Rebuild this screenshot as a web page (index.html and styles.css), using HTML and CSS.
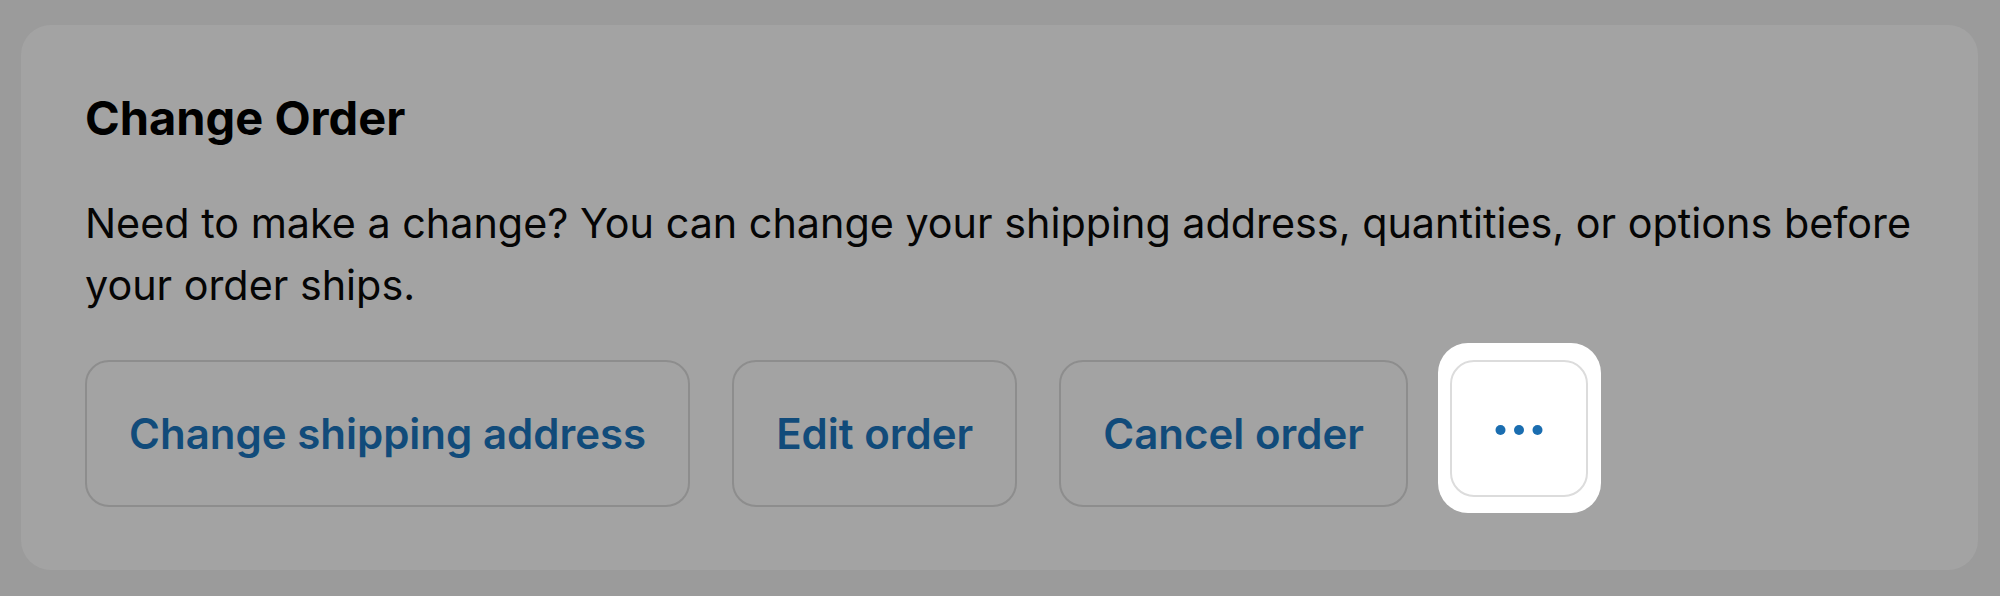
FILE: index.html
```html
<!DOCTYPE html>
<html lang="en">
<head>
<meta charset="utf-8">
<title>Change Order</title>
<link rel="stylesheet" href="styles.css">
</head>
<body>
<section class="card">
  <h2 class="card-title">Change Order</h2>
  <p class="card-text">Need to make a change? You can change your shipping address, quantities, or options before your order ships.</p>
  <div class="actions">
    <button class="btn" type="button">Change shipping address</button>
    <button class="btn" type="button">Edit order</button>
    <button class="btn" type="button">Cancel order</button>
    <span class="spotlight">
      <button class="btn-more" type="button" aria-label="More actions">
        <svg width="48" height="12" viewBox="0 0 48 12" aria-hidden="true">
          <circle cx="5.5" cy="6" r="5" fill="#1a6db0"/>
          <circle cx="24" cy="6" r="5" fill="#1a6db0"/>
          <circle cx="42.5" cy="6" r="5" fill="#1a6db0"/>
        </svg>
      </button>
    </span>
  </div>
</section>
</body>
</html>
```

FILE: styles.css
```css
* { box-sizing: border-box; }

html, body {
  margin: 0;
  padding: 0;
}

body {
  background: #9b9b9b;
  font-family: Inter, "Liberation Sans", sans-serif;
  color: #000;
  width: 2000px;
  height: 596px;
  overflow: hidden;
  padding: 25px 22px 0 21px;
}

.card {
  background: #a3a3a3;
  border-radius: 30px;
  height: 545px;
  padding: 66px 64px 0 64px;
  display: flex;
  flex-direction: column;
}

.card-title {
  margin: 0;
  font-size: 47px;
  line-height: 54px;
  font-weight: 700;
  color: #000;
}

.card-text {
  margin: 47px 0 0 0;
  font-size: 41.3px;
  line-height: 62px;
  font-weight: 400;
  color: #050505;
}

.actions {
  margin-top: 44px;
  display: flex;
  align-items: flex-start;
  gap: 42px;
}

.btn {
  height: 147px;
  padding: 0 42px;
  border: 2px solid #8d8d8d;
  border-radius: 24px;
  background: transparent;
  font-family: Inter, "Liberation Sans", sans-serif;
  font-size: 42px;
  font-weight: 600;
  color: #114b7a;
  cursor: pointer;
}

.spotlight {
  display: flex;
  margin: -17px -13px -16px -12px;
  padding: 17px 13px 16px 12px;
  background: #fff;
  border-radius: 30px;
}

.btn-more {
  width: 138px;
  height: 137px;
  padding: 0;
  border: 2px solid #dcdcdc;
  border-radius: 24px;
  background: #fff;
  display: flex;
  align-items: center;
  justify-content: center;
  cursor: pointer;
}

.btn-more svg {
  display: block;
  margin-top: 3px;
}
```
